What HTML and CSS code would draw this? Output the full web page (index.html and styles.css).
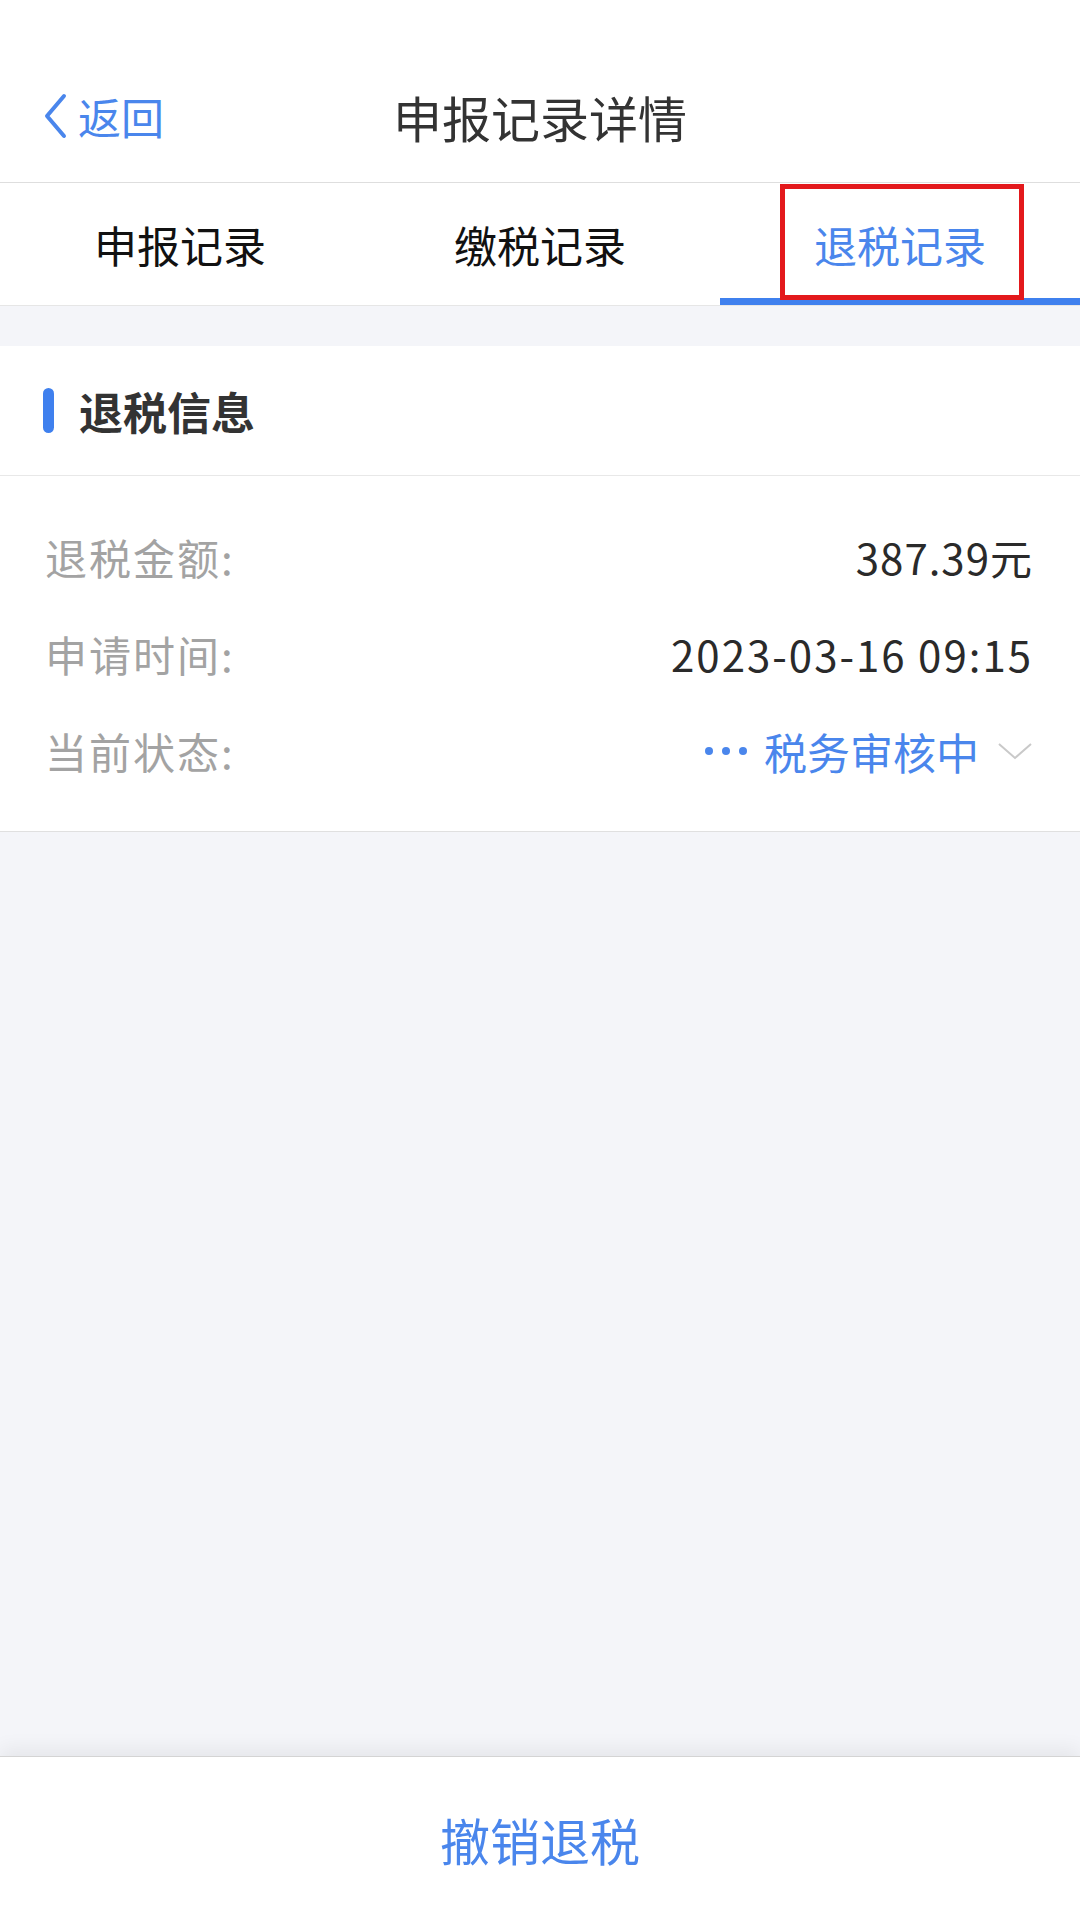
FILE: index.html
```html
<!DOCTYPE html>
<html lang="zh-CN">
<head>
    <meta charset="UTF-8">
    <meta name="viewport" content="width=device-width, initial-scale=1.0">
    <title>申报记录详情</title>
    <link rel="stylesheet" href="styles.css">
</head>
<body>
    <div class="strona">
        <div class="nawigacja">
            <div class="powrot">
                <svg class="strzalka" width="26" height="46" viewBox="0 0 26 46">
                    <polyline points="22,3 5,23 22,43" fill="none" stroke="#4a86ec" stroke-width="4" stroke-linecap="round" stroke-linejoin="round"/>
                </svg>
                <span>返回</span>
            </div>
            <div class="tytul">申报记录详情</div>
        </div>

        <div class="zakladki">
            <div class="zakladka">申报记录</div>
            <div class="zakladka">缴税记录</div>
            <div class="zakladka aktywna">退税记录</div>
            <div class="ramka"></div>
        </div>

        <div class="karta">
            <div class="karta-naglowek">
                <span class="pasek"></span>
                <span>退税信息</span>
            </div>
            <div class="wiersze">
                <div class="wiersz">
                    <span class="etykieta">退税金额:</span>
                    <span class="wartosc kwota">387.39元</span>
                </div>
                <div class="wiersz">
                    <span class="etykieta">申请时间:</span>
                    <span class="wartosc data">2023-03-16 09:15</span>
                </div>
                <div class="wiersz">
                    <span class="etykieta">当前状态:</span>
                    <span class="wartosc status">
                        <svg class="kropki" width="46" height="10" viewBox="0 0 46 10">
                            <circle cx="5" cy="5" r="4" fill="#4a86ec"/>
                            <circle cx="22" cy="5" r="4" fill="#4a86ec"/>
                            <circle cx="39" cy="5" r="4" fill="#4a86ec"/>
                        </svg>
                        <span>税务审核中</span>
                        <svg class="rozwin" width="36" height="20" viewBox="0 0 36 20">
                            <polyline points="2,3 18,17 34,3" fill="none" stroke="#c9c9c9" stroke-width="2"/>
                        </svg>
                    </span>
                </div>
            </div>
        </div>

        <div class="wypelnienie"></div>

        <div class="dol">
            <span class="anuluj">撤销退税</span>
        </div>
    </div>
</body>
</html>
```

FILE: styles.css
```css
body {
    margin: 0;
    font-family: "Noto Sans CJK SC", "Noto Sans", sans-serif;
    background-color: #f4f5f9;
    color: #333;
}

.strona {
    display: flex;
    flex-direction: column;
    height: 1920px;
}

.nawigacja {
    position: relative;
    height: 132px;
    padding-top: 50px;
    background-color: #fff;
    border-bottom: 1px solid #dedede;
    display: flex;
    align-items: center;
    justify-content: center;
}

.powrot {
    position: absolute;
    left: 42px;
    top: 50px;
    height: 132px;
    display: flex;
    align-items: center;
    gap: 10px;
    color: #4a86ec;
    font-size: 43px;
}

.tytul {
    font-size: 49px;
    color: #333;
}

.zakladki {
    position: relative;
    display: grid;
    grid-template-columns: repeat(3, 1fr);
    height: 122px;
    background-color: #fff;
    border-bottom: 1px solid #e6e6e6;
}

.zakladka {
    display: flex;
    align-items: center;
    justify-content: center;
    font-size: 43px;
    color: #111;
    box-sizing: border-box;
}

.zakladka.aktywna {
    color: #4a86ec;
    border-bottom: 7px solid #3f80ee;
    padding-top: 7px;
}

.ramka {
    position: absolute;
    left: 780px;
    top: 1px;
    width: 234px;
    height: 106px;
    border: 5px solid #e3191c;
}

.karta {
    margin-top: 40px;
    background-color: #fff;
    border-bottom: 1px solid #e0e0e0;
}

.karta-naglowek {
    height: 129px;
    display: flex;
    align-items: center;
    gap: 25px;
    padding-left: 43px;
    border-bottom: 1px solid #e8e8e8;
    font-size: 44px;
    font-weight: bold;
    color: #333;
}

.pasek {
    width: 11px;
    height: 45px;
    border-radius: 6px;
    background-color: #3f80ee;
}

.wiersze {
    padding: 32px 47px 32px 45px;
}

.wiersz {
    height: 97px;
    display: flex;
    align-items: center;
    justify-content: space-between;
    font-size: 42px;
}

.etykieta {
    color: #a3a3a3;
    letter-spacing: 2px;
}

.wartosc {
    color: #2a2a2a;
}

.kwota {
    letter-spacing: 1px;
}

.data {
    letter-spacing: 2px;
}

.status {
    display: flex;
    align-items: center;
    color: #4a86ec;
    font-size: 43px;
}

.kropki {
    margin-right: 14px;
}

.rozwin {
    margin-left: 18px;
}

.wypelnienie {
    flex: 1;
}

.dol {
    height: 163px;
    background-color: #fff;
    border-top: 1px solid #d4d4d4;
    box-shadow: 0 -8px 18px rgba(0, 0, 0, 0.06);
    display: flex;
    align-items: center;
    justify-content: center;
}

.anuluj {
    font-size: 50px;
    color: #4a86ec;
}
```
